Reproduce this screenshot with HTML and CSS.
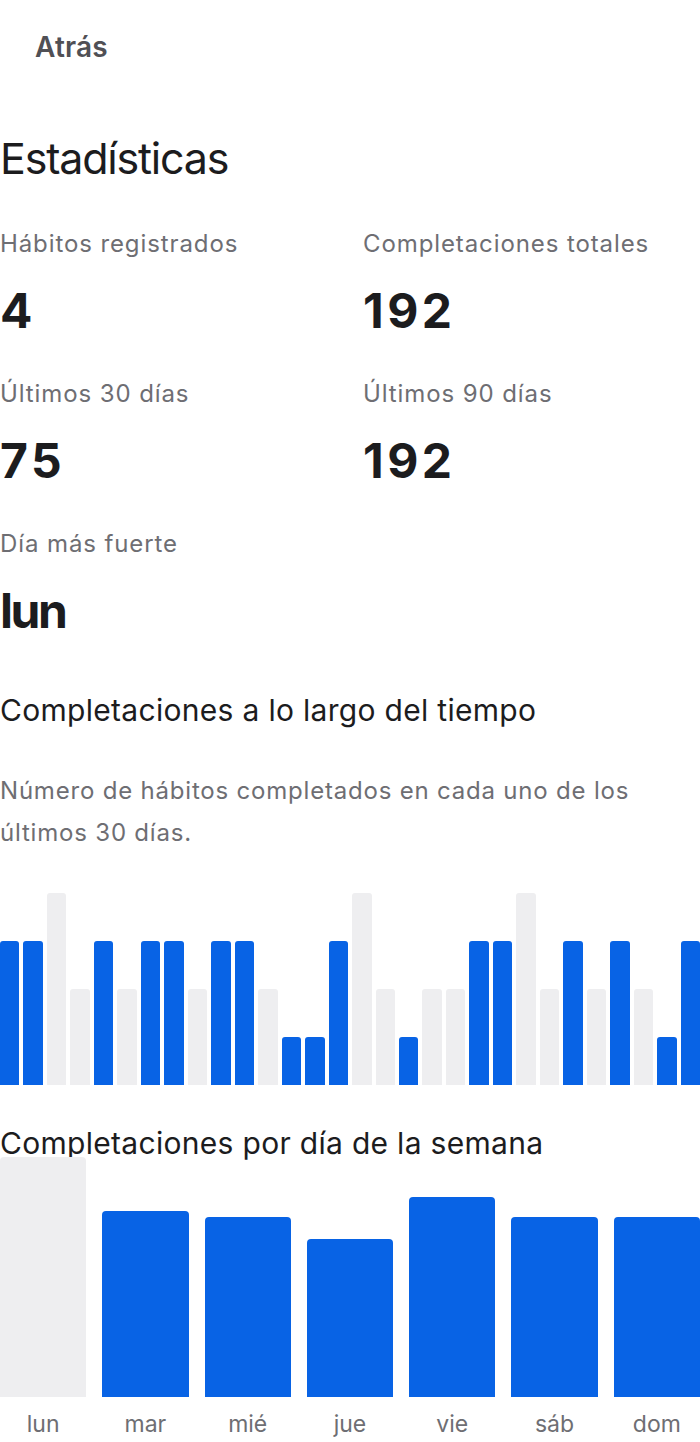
FILE: index.html
```html
<!DOCTYPE html>
<html lang="es">
<head>
  <meta charset="UTF-8">
  <title>Estadísticas</title>
  <link rel="stylesheet" href="styles.css">
</head>
<body>
  <div class="topbar">
    <button class="back-btn">Atrás</button>
  </div>

  <h1 class="page-title">Estadísticas</h1>

  <!-- resumen -->
  <div class="stats-grid">
    <div class="stat">
      <div class="stat-label">Hábitos registrados</div>
      <div class="stat-value">4</div>
    </div>
    <div class="stat">
      <div class="stat-label">Completaciones totales</div>
      <div class="stat-value">192</div>
    </div>
    <div class="stat">
      <div class="stat-label">Últimos 30 días</div>
      <div class="stat-value">75</div>
    </div>
    <div class="stat">
      <div class="stat-label">Últimos 90 días</div>
      <div class="stat-value">192</div>
    </div>
    <div class="stat">
      <div class="stat-label">Día más fuerte</div>
      <div class="stat-value stat-value--text">lun</div>
    </div>
  </div>

  <!-- últimos 30 días -->
  <h2 class="section-title">Completaciones a lo largo del tiempo</h2>
  <p class="section-desc">Número de hábitos completados en cada uno de los últimos 30 días.</p>

  <div class="daily-chart">
    <div class="bar" style="height: 144px"></div>
    <div class="bar" style="height: 144px"></div>
    <div class="bar bar--muted" style="height: 192px"></div>
    <div class="bar bar--muted" style="height: 96px"></div>
    <div class="bar" style="height: 144px"></div>
    <div class="bar bar--muted" style="height: 96px"></div>
    <div class="bar" style="height: 144px"></div>
    <div class="bar" style="height: 144px"></div>
    <div class="bar bar--muted" style="height: 96px"></div>
    <div class="bar" style="height: 144px"></div>
    <div class="bar" style="height: 144px"></div>
    <div class="bar bar--muted" style="height: 96px"></div>
    <div class="bar" style="height: 48px"></div>
    <div class="bar" style="height: 48px"></div>
    <div class="bar" style="height: 144px"></div>
    <div class="bar bar--muted" style="height: 192px"></div>
    <div class="bar bar--muted" style="height: 96px"></div>
    <div class="bar" style="height: 48px"></div>
    <div class="bar bar--muted" style="height: 96px"></div>
    <div class="bar bar--muted" style="height: 96px"></div>
    <div class="bar" style="height: 144px"></div>
    <div class="bar" style="height: 144px"></div>
    <div class="bar bar--muted" style="height: 192px"></div>
    <div class="bar bar--muted" style="height: 96px"></div>
    <div class="bar" style="height: 144px"></div>
    <div class="bar bar--muted" style="height: 96px"></div>
    <div class="bar" style="height: 144px"></div>
    <div class="bar bar--muted" style="height: 96px"></div>
    <div class="bar" style="height: 48px"></div>
    <div class="bar" style="height: 144px"></div>
  </div>

  <!-- por día de la semana -->
  <h2 class="section-title section-title--week">Completaciones por día de la semana</h2>

  <div class="week-chart">
    <div class="week-col">
      <div class="week-bar week-bar--muted" style="height: 240px"></div>
      <div class="week-label">lun</div>
    </div>
    <div class="week-col">
      <div class="week-bar" style="height: 186px"></div>
      <div class="week-label">mar</div>
    </div>
    <div class="week-col">
      <div class="week-bar" style="height: 180px"></div>
      <div class="week-label">mié</div>
    </div>
    <div class="week-col">
      <div class="week-bar" style="height: 158px"></div>
      <div class="week-label">jue</div>
    </div>
    <div class="week-col">
      <div class="week-bar" style="height: 200px"></div>
      <div class="week-label">vie</div>
    </div>
    <div class="week-col">
      <div class="week-bar" style="height: 180px"></div>
      <div class="week-label">sáb</div>
    </div>
    <div class="week-col">
      <div class="week-bar" style="height: 180px"></div>
      <div class="week-label">dom</div>
    </div>
  </div>
</body>
</html>
```

FILE: styles.css
```css
body {
  margin: 0;
  width: 700px;
  font-family: Inter, "Noto Sans", "Liberation Sans", sans-serif;
  color: #1c1c1e;
  background: #fff;
}

/* barra superior */
.topbar {
  padding: 30px 0 0 35px;
}

.back-btn {
  padding: 0;
  border: none;
  background: none;
  font-family: inherit;
  font-size: 28px;
  line-height: 34px;
  font-weight: 600;
  letter-spacing: 0.2px;
  color: #505055;
  cursor: pointer;
}

.page-title {
  margin: 68px 0 46px;
  font-size: 43px;
  line-height: 52px;
  font-weight: 400;
  letter-spacing: -1.2px;
}

/* resumen en dos columnas */
.stats-grid {
  display: grid;
  grid-template-columns: 1fr 1fr;
  column-gap: 26px;
  row-gap: 40px;
}

.stat-label {
  font-size: 24px;
  line-height: 28px;
  color: #6e6e73;
  letter-spacing: 0.9px;
}

.stat-value {
  margin-top: 24px;
  font-size: 48px;
  line-height: 58px;
  font-weight: 700;
  letter-spacing: 3.5px;
}

.stat-value--text {
  letter-spacing: -2.4px;
}

.section-title {
  margin: 52px 0 0;
  font-size: 30px;
  line-height: 36px;
  font-weight: 400;
  letter-spacing: 0.3px;
}

.section-desc {
  margin: 42px 0 0;
  font-size: 24px;
  line-height: 42px;
  color: #6e6e73;
  letter-spacing: 0.8px;
}

/* gráfico de 30 días */
.daily-chart {
  display: flex;
  align-items: flex-end;
  gap: 4px;
  height: 192px;
  margin-top: 39px;
}

.bar {
  flex: 1;
  background: #0863e5;
  border-radius: 3px 3px 0 0;
}

.bar--muted {
  background: #eeeef0;
}

.section-title--week {
  margin-top: 40px;
}

/* gráfico por día de la semana */
.week-chart {
  display: flex;
  gap: 16px;
  margin-top: -4px;
}

.week-col {
  flex: 1;
  display: flex;
  flex-direction: column;
  height: 281px;
}

.week-bar {
  margin-top: auto;
  background: #0863e5;
  border-radius: 4px 4px 0 0;
}

.week-bar--muted {
  background: #eeeef0;
}

.week-label {
  margin-top: 13px;
  font-size: 23px;
  line-height: 28px;
  text-align: center;
  color: #6e6e73;
}
```
